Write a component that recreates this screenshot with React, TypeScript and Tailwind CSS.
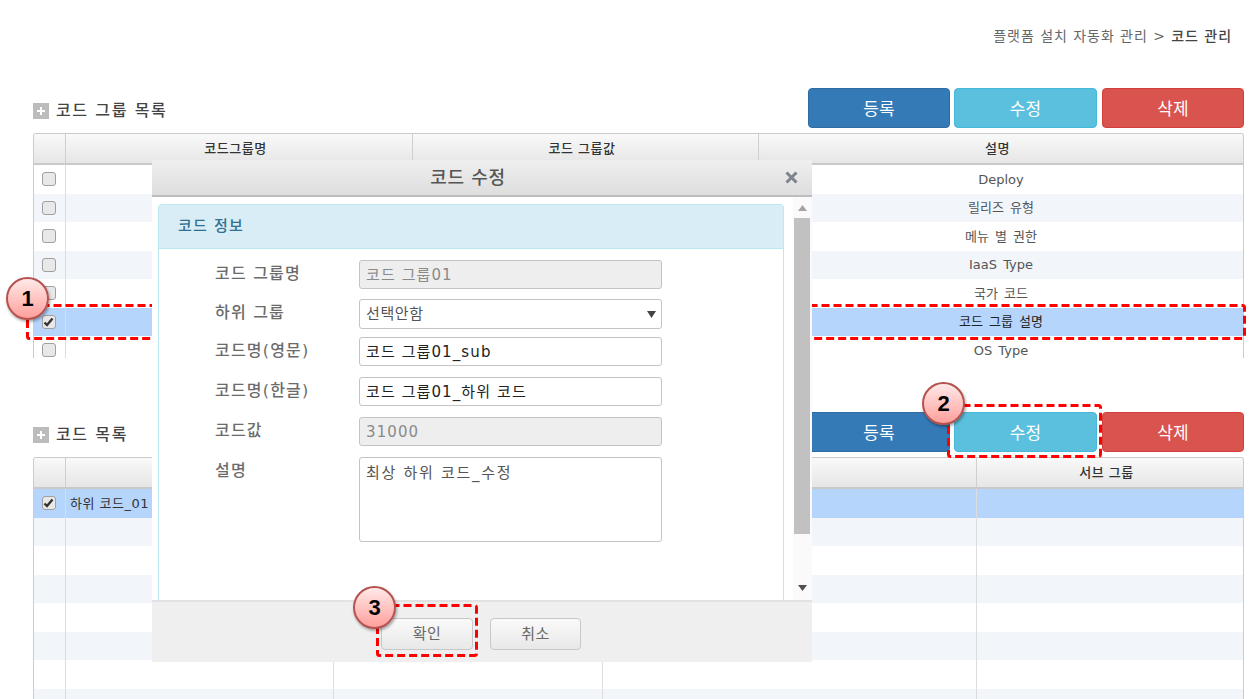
const LIST_ROWS = ["Deploy", "릴리즈 유형", "메뉴 별 권한", "IaaS Type", "국가 코드", "코드 그룹 설명", "OS Type"];

function Checkbox({ checked = false }: { checked?: boolean }) {
  return (
    <span className="mr-[2px] flex h-[14px] w-[14px] items-center justify-center rounded-[3px] border border-[#a0a0a0] bg-[#e8e8e8]">
      {checked && (
        <svg width="11" height="10" viewBox="0 0 11 10" fill="none">
          <path d="M1.5 5.5 L4 8 L9.5 1.5" stroke="#333" strokeWidth="2.4" />
        </svg>
      )}
    </span>
  );
}

function SectionHead({ title }: { title: string }) {
  return (
    <div className="flex h-[40px] items-center justify-between">
      <div className="flex items-center gap-[7px] pt-[6px]">
        <span className="flex h-[16px] w-[16px] items-center justify-center bg-[#bcbcbc] text-white">
          <svg width="8" height="8" viewBox="0 0 8 8">
            <path d="M3 0h2v3h3v2H5v3H3V5H0V3h3z" fill="#fff" />
          </svg>
        </span>
        <span className="text-[16px] font-medium tracking-[1.6px] text-[#444]">{title}</span>
      </div>
      <div className="flex">
        <button className="h-[40px] w-[142px] rounded-[4px] border border-[#2e6da4] bg-[#337ab7] pt-[3px] text-[17px] text-white">등록</button>
        <button className="ml-[4px] h-[40px] w-[143px] rounded-[4px] border border-[#46b8da] bg-[#5bc0de] pt-[3px] text-[17px] text-white">수정</button>
        <button className="ml-[5px] h-[40px] w-[142px] rounded-[4px] border border-[#d43f3a] bg-[#d9534f] pt-[3px] text-[17px] text-white">삭제</button>
      </div>
    </div>
  );
}

function HeaderRow({ grid, labels }: { grid: string; labels: string[] }) {
  return (
    <div className={`grid h-[31px] border-b-2 border-[#c9c9c9] bg-gradient-to-b from-[#f9f9f9] to-[#e6e6e6] ${grid}`}>
      {labels.map((label, i) => (
        <div
          key={i}
          className="flex items-center justify-center border-r border-[#cfcfcf] pt-[1px] pr-[7px] text-[13px] font-medium tracking-[0.5px] text-[#333] last:border-r-0"
        >
          {label}
        </div>
      ))}
    </div>
  );
}

function GroupTable() {
  return (
    <div className="mt-[5px] h-[225px] overflow-hidden rounded-t-[3px] border-x border-t border-[#cccccc]">
      <HeaderRow grid="grid-cols-[32px_347px_346px_1fr]" labels={["", "코드그룹명", "코드 그룹값", "설명"]} />
      {LIST_ROWS.map((text, i) => (
        <div
          key={text}
          className={`grid h-[28.5px] grid-cols-[32px_1fr] ${i === 5 ? "bg-[#b5d5fd]" : i % 2 === 1 ? "bg-[#f2f6fb]" : "bg-white"}`}
        >
          <div className="flex items-center justify-center border-r border-[#dddddd]">
            <Checkbox checked={i === 5} />
          </div>
          <div className="grid grid-cols-[347px_346px_1fr]">
            <div />
            <div />
            <div className={`flex items-center justify-center text-[13px] [word-spacing:2px] ${i === 5 ? "text-[#222]" : "text-[#555]"}`}>{text}</div>
          </div>
        </div>
      ))}
    </div>
  );
}

function ChildTable() {
  const rows = [0, 1, 2, 3, 4, 5, 6, 7];
  return (
    <div className="mt-[5px] h-[242px] overflow-hidden rounded-t-[3px] border-x border-t border-[#cccccc]">
      <HeaderRow grid="grid-cols-[32px_268px_269px_374px_1fr]" labels={["", "", "", "", "서브 그룹"]} />
      {rows.map((i) => (
        <div
          key={i}
          className={`grid h-[28.5px] grid-cols-[32px_268px_269px_374px_1fr] ${i === 0 ? "bg-[#b5d5fd]" : i % 2 === 1 ? "bg-[#f2f6fb]" : "bg-white"}`}
        >
          <div className="flex items-center justify-center border-r border-[#dddddd]">{i === 0 && <Checkbox checked />}</div>
          <div className="flex items-center overflow-hidden border-r border-[#dddddd] pl-[4px] text-[13px] tracking-[0.5px] whitespace-nowrap text-[#333]">
            {i === 0 && "하위 코드_01"}
          </div>
          <div className="border-r border-[#dddddd]" />
          <div className="border-r border-[#dddddd]" />
          <div />
        </div>
      ))}
    </div>
  );
}

function FormRow({ label, children, className = "" }: { label: string; children: React.ReactNode; className?: string }) {
  return (
    <div className={`flex ${className}`}>
      <div className="w-[144px] pt-[2px] text-[16px] leading-[24px] font-medium tracking-[1.2px] text-[#6b6b6b]">{label}</div>
      {children}
    </div>
  );
}

function Field({ value, disabled = false }: { value: string; disabled?: boolean }) {
  return (
    <div
      className={`flex h-[29px] w-[303px] items-center rounded-[3px] border border-[#c4c4c4] px-[6px] pt-[1px] text-[15px] tracking-[1.1px] ${disabled ? "bg-[#eeeeee] text-[#8a8a8a]" : "bg-white text-[#222]"}`}
    >
      {value}
    </div>
  );
}

function EditDialog() {
  return (
    <div className="absolute top-[160px] left-[152px] z-20 flex h-[502px] w-[660px] flex-col bg-white">
      <div className="relative flex h-[37px] shrink-0 items-center justify-center border-b-2 border-[#bdbdbd] bg-gradient-to-b from-[#efefef] to-[#dedede] pr-[28px] text-[18px] font-medium tracking-[0.7px] text-[#555]">
        코드 수정
        <svg className="absolute top-[11px] right-[14px]" width="13" height="13" viewBox="0 0 13 13">
          <path d="M1.5 1.5 L11.5 11.5 M11.5 1.5 L1.5 11.5" stroke="#7d858c" strokeWidth="3" />
        </svg>
      </div>

      <div className="flex min-h-0 flex-1 overflow-hidden">
        <div className="min-w-0 flex-1 overflow-hidden pt-[7px] pr-[9px] pl-[6px]">
          <div className="h-[420px] rounded-t-[4px] border-x border-t border-[#bce8f1]">
            <div className="flex h-[44px] items-center border-b border-[#bce8f1] bg-[#d9edf7] pl-[19px] text-[15px] font-medium tracking-[1.2px] text-[#31708f]">
              코드 정보
            </div>
            <div className="flex flex-col pt-[11px] pl-[56px]">
              <FormRow label="코드 그룹명">
                <Field value="코드 그룹01" disabled />
              </FormRow>
              <FormRow label="하위 그룹" className="mt-[10px]">
                <div className="flex h-[30px] w-[303px] items-center justify-between rounded-[3px] border border-[#c4c4c4] bg-white pr-[5px] pl-[6px] text-[15px] tracking-[0.6px] text-[#555]">
                  선택안함
                  <svg width="9" height="7" viewBox="0 0 9 7">
                    <path d="M0 0h9L4.5 7z" fill="#444" />
                  </svg>
                </div>
              </FormRow>
              <FormRow label="코드명(영문)" className="mt-[8px]">
                <Field value="코드 그룹01_sub" />
              </FormRow>
              <FormRow label="코드명(한글)" className="mt-[11px]">
                <Field value="코드 그룹01_하위 코드" />
              </FormRow>
              <FormRow label="코드값" className="mt-[11px]">
                <Field value="31000" disabled />
              </FormRow>
              <FormRow label="설명" className="mt-[11px]">
                <div className="h-[85px] w-[303px] rounded-[3px] border border-[#c4c4c4] bg-white px-[6px] py-[4px] text-[15px] tracking-[1.7px] text-[#555]">
                  최상 하위 코드_수정
                </div>
              </FormRow>
            </div>
          </div>
        </div>

        <div className="flex w-[19px] shrink-0 flex-col items-center bg-[#fafafa] pr-[1px]">
          <svg className="mt-[8px] mb-[7px]" width="9" height="6" viewBox="0 0 9 6">
            <path d="M4.5 0L9 6H0z" fill="#a3a3a3" />
          </svg>
          <div className="h-[316px] w-[16px] bg-[#c1c1c1]" />
          <svg className="mt-[51px]" width="9" height="6" viewBox="0 0 9 6">
            <path d="M0 0h9L4.5 6z" fill="#505050" />
          </svg>
        </div>
      </div>

      <div className="flex h-[62px] shrink-0 items-start gap-[17px] border-t-2 border-[#e2e2e2] bg-[#efefef] pt-[16px] pl-[229px]">
        <button className="h-[32px] w-[92px] rounded-[4px] border border-[#c8c8c8] bg-gradient-to-b from-[#fafafa] to-[#e8e8e8] text-[15px] tracking-[0.5px] text-[#666]">확인</button>
        <button className="h-[32px] w-[91px] rounded-[4px] border border-[#c8c8c8] bg-gradient-to-b from-[#fafafa] to-[#e8e8e8] text-[15px] tracking-[0.5px] text-[#666]">취소</button>
      </div>
    </div>
  );
}

function DashedBox({ x, y, w, h, z }: { x: number; y: number; w: number; h: number; z: number }) {
  return (
    <svg className="pointer-events-none absolute" style={{ left: x, top: y, zIndex: z }} width={w} height={h}>
      <rect x="1.5" y="1.5" width={w - 3} height={h - 3} rx="2" fill="none" stroke="#ff0000" strokeWidth="3" strokeDasharray="8 4" />
    </svg>
  );
}

function Callout({ n, x, y }: { n: number; x: number; y: number }) {
  return (
    <div
      className="absolute z-40 flex h-[43px] w-[43px] items-center justify-center rounded-full border-2 border-[#b5524f] bg-gradient-to-b from-[#ffe9e8] to-[#fd9f9c] font-['Liberation_Sans',sans-serif] text-[22px] font-bold text-black shadow-[1px_2px_3px_rgba(0,0,0,0.35)]"
      style={{ left: x, top: y }}
    >
      {n}
    </div>
  );
}

export default function App() {
  return (
    <div className="relative h-[699px] w-[1251px] overflow-hidden bg-white pr-[7px] pl-[33px] font-['DejaVu_Sans','Noto_Sans_CJK_KR',sans-serif]">
      <div className="flex h-[88px] justify-end pt-[27px] pr-[12px] text-[14px] leading-[18px] tracking-[0.95px] text-[#666]">
        플랫폼 설치 자동화 관리&nbsp;&gt;&nbsp;<span className="font-medium text-[#444]">코드 관리</span>
      </div>

      <SectionHead title="코드 그룹 목록" />
      <GroupTable />

      <div className="mt-[54px]">
        <SectionHead title="코드 목록" />
        <ChildTable />
      </div>

      <DashedBox x={26} y={304} w={1220} h={36} z={10} />
      <EditDialog />
      <DashedBox x={947} y={404} w={155} h={54} z={30} />
      <DashedBox x={376} y={604} w={102} h={53} z={30} />
      <Callout n={1} x={6} y={277} />
      <Callout n={2} x={922} y={382} />
      <Callout n={3} x={353} y={586} />
    </div>
  );
}
